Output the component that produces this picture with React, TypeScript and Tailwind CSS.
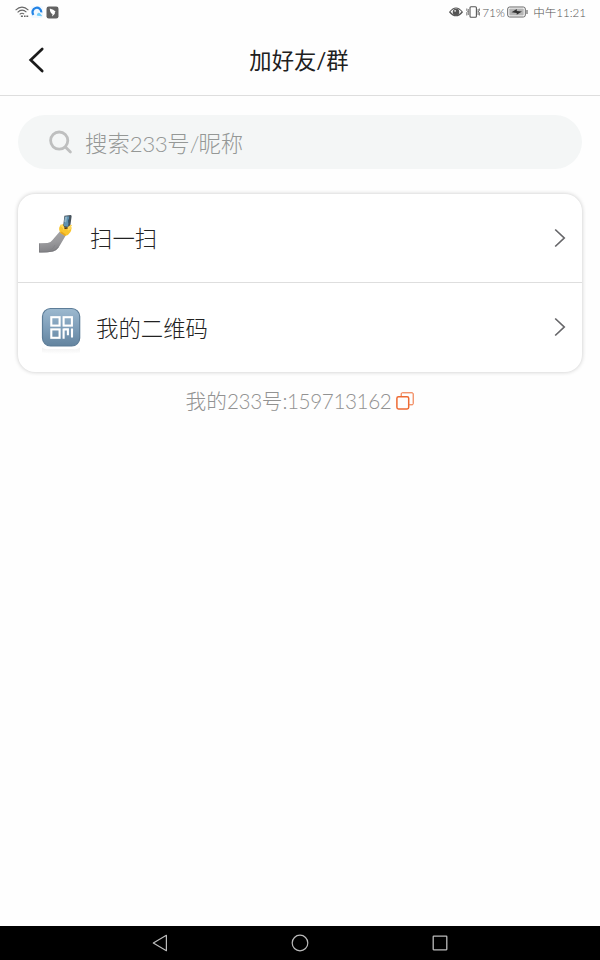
import type { ReactNode } from 'react';

function StatusBar() {
  return (
    <div className="flex h-6 items-center justify-between pr-3.5 pl-[15px] text-[#555]">
      <div className="flex items-center gap-1">
        <svg width="14" height="12" viewBox="0 0 14 12" fill="none" stroke="#666" strokeWidth="1.1">
          <path d="M.6 4.1Q7-1.9 13.4 4.1M2.6 6.3Q7 2.2 11.4 6.1M4.7 8.4Q7 6.3 9.1 8.2" />
          <path d="M5.9 10.2h2M9 10.2h1.6M11.4 10.2h1.8" strokeWidth="1.6" />
        </svg>
        <svg width="12" height="12" viewBox="0 0 11 11" className="-ml-0.5">
          <rect width="11" height="11" rx="2" fill="#f0f8ff" />
          <path d="M2.3 8.1A4 4 0 1 1 9.4 5.8" fill="none" stroke="#2383e5" strokeWidth="2" />
          <path d="M5.6 8.4Q6.5 5.4 8.2 7L9.7 9Z" fill="#6ccbfb" stroke="#6ccbfb" strokeWidth=".8" />
        </svg>
        <svg width="13" height="13" viewBox="0 0 13 13" className="-ml-px">
          <rect x=".5" y=".5" width="12" height="12" rx="2.3" fill="#626262" />
          <path d="M3.7 2.4Q7.8 3.4 9.5 5.4L8.5 7.2 9.1 7.4 6.1 10.6 6.5 8.1Q4.1 7.2 3.7 2.4Z" fill="#fff" />
        </svg>
      </div>
      <div className="flex items-center font-light">
        <svg width="14" height="12" viewBox="0 0 14 12" fill="none" stroke="#555" strokeWidth="1.2">
          <path d="M.7 6Q7-2 13.3 6 7 13.5.7 6Z" />
          <circle cx="7" cy="6" r="2.7" fill="#555" />
          <circle cx="6.1" cy="4.9" r=".8" fill="#fff" stroke="none" />
        </svg>
        <svg width="14" height="12" viewBox="0 0 14 12" fill="none" stroke="#555" strokeWidth="1.1" className="ml-[3px]">
          <rect x="4" y=".8" width="6.4" height="10.4" rx="1" />
          <path d="M.8 2.5v2l1 1-1 1v3M2.3 3v6M13.4 2.5v2l-1 1 1 1v3M12.1 3v6" strokeWidth=".8" />
        </svg>
        <span className="ml-0.5 w-[23px] pt-0.5 text-[11.8px] leading-none">71%</span>
        <svg width="21" height="12" viewBox="0 0 21 12" className="ml-0.5">
          <rect x=".7" y="1" width="17.6" height="10" rx="2" fill="#fff" stroke="#666" strokeWidth="1" />
          <rect x="2.3" y="2.6" width="14.4" height="6.8" rx=".7" fill="#b5b5b5" />
          <path d="M4.5 6.2 9.8 3v2l5.2.4-5.3 3.3V6.9Z" fill="#333" />
          <path d="M20 4v4" stroke="#666" strokeWidth="1.2" />
        </svg>
        <span className="ml-[5px] pt-0.5 text-[11.6px] leading-none whitespace-nowrap">中午11:21</span>
      </div>
    </div>
  );
}

// forearm in a grey sleeve holding up a phone
function SelfieIcon() {
  return (
    <svg width="34" height="39" viewBox="0 0 34 39">
      <defs>
        <linearGradient id="sleeve" x1="0" y1="0" x2="0.2" y2="1">
          <stop offset="0" stopColor="#a6a6a8" />
          <stop offset=".6" stopColor="#98989b" />
          <stop offset="1" stopColor="#828286" />
        </linearGradient>
      </defs>
      <path d="M0 28.2 8.5 28Q11.8 27.6 13.5 25L20.8 16.6 26.6 20.8 19.8 32.2Q17.8 35.4 14 36.4 8 37.7 0 37.4Z" fill="url(#sleeve)" />
      <path d="M.3 28.6v8.4Q8 37.4 14 36Q17.4 35.2 19.4 32" fill="none" stroke="#77777b" strokeWidth=".7" />
      <path d="M11 35.3Q15 33.3 16 30" fill="none" stroke="#828287" strokeWidth=".7" />
      <path d="M20.2 15Q19.5 10.7 23.6 9.3L31 11.5Q33.5 14 31.3 17.2 29.5 20.4 26.2 21L21.3 17.7Z" fill="#f9c52c" />
      <path d="M21.3 17.7 26.2 21 26.8 19.6 22.3 16.4Z" fill="#e6a51e" />
      <path d="M25.4.8 31.7.1Q32.8.2 32.6 1.4L31 13 24 12.2Z" fill="#46535d" />
      <path d="M26.1 1.7 30.2 1.3 29 11.8 24.8 11.1Z" fill="#5f93b2" />
      <path d="M26.1 1.7 28.4 1.5 27 7.6 25.2 6.8Z" fill="#8fb4c8" />
      <path d="M29.2 4.6h1v3.2h-1Z" fill="#315771" />
      <path d="M24 12.8q2.6 1 5-.2" fill="none" stroke="#4c3817" strokeWidth="1.6" />
      <path d="M22 10.5q2.6.6 2.6 3.3M32 10.6l-2.6 2M32 13l-2.7 1.6" fill="none" stroke="#ffd757" strokeWidth="1.8" strokeLinecap="round" />
    </svg>
  );
}

function QrIcon() {
  return (
    <svg width="40" height="48" viewBox="0 0 40 48">
      <defs>
        <linearGradient id="tile" x1="0" y1="0" x2="0" y2="1">
          <stop offset="0" stopColor="#9db9cf" />
          <stop offset=".5" stopColor="#7f9fba" />
          <stop offset="1" stopColor="#63849f" />
        </linearGradient>
        <linearGradient id="reflection" x1="0" y1="0" x2="0" y2="1">
          <stop offset="0" stopColor="#f1f1f1" />
          <stop offset="1" stopColor="#fff" />
        </linearGradient>
      </defs>
      <path d="M1 40.5Q4 43 8 42h24q4 1 7-1.5v5Q20 49 1 45.5Z" fill="url(#reflection)" />
      <rect x="1.5" y="1.5" width="37.2" height="37.4" rx="8" fill="url(#tile)" stroke="#5d7d98" strokeWidth="1.2" />
      <g fill="none" stroke="#fff" strokeWidth="2.1">
        <rect x="10.3" y="10.2" width="8.3" height="8.4" />
        <rect x="22.6" y="10.2" width="8.3" height="8.4" />
        <rect x="10.3" y="22.4" width="8.3" height="8.4" />
        <path d="M22.6 21.4v10.4M22.6 22.4h4.3v5.8M31 21.4v9" />
      </g>
    </svg>
  );
}

function Chevron() {
  return (
    <svg width="12" height="20" viewBox="0 0 12 20" fill="none" stroke="#666669" strokeWidth="1.7">
      <path d="M1.2 1.5 10.2 10 1.2 18.5" />
    </svg>
  );
}

function MenuRow({ icon, label, className }: { icon: ReactNode; label: string; className?: string }) {
  return (
    <button className={`flex w-full items-center pr-4 pb-px text-left ${className ?? ''}`}>
      {icon}
      <span className="flex-1 pt-[3px] text-[22.4px] leading-8 text-[#222]">{label}</span>
      <Chevron />
    </button>
  );
}

export default function App() {
  return (
    <div className="flex h-[960px] w-[600px] flex-col bg-[#fefefe] font-[Lato,'Noto_Sans_CJK_SC',sans-serif] font-light">
      <StatusBar />

      <header className="grid h-[72px] shrink-0 grid-cols-[1fr_auto_1fr] items-center border-b border-[#dedede]">
        <button className="ml-7 w-5">
          <svg width="17" height="26" viewBox="0 0 17 26" fill="none" stroke="#1b1b1b" strokeWidth="2.7">
            <path d="M14.2 2 2.7 13l11.5 11" strokeLinecap="round" />
          </svg>
        </button>
        <h1 className="-ml-0.5 pt-[3px] text-[22.3px] leading-8 font-normal text-[#202020]">加好友/群</h1>
      </header>

      <main className="flex-1 px-[18px] pt-[19px]">
        <div className="flex h-[54px] items-center rounded-full bg-[#f4f6f6] pl-[31px]">
          <svg width="24" height="24" viewBox="0 0 24 24" fill="none" stroke="#bebfbf" strokeWidth="2.8">
            <circle cx="10.2" cy="10.6" r="8.6" />
            <path d="m16.4 17 5 5" strokeLinecap="round" />
          </svg>
          <span className="ml-3 pt-[3px] text-[22.4px] leading-8 text-[#959896]">
            搜索<span className="tracking-[-0.5px]">233</span>号<span className="tracking-[-1px]">/</span>昵称
          </span>
        </div>

        <div className="mt-[25px] overflow-hidden rounded-[17px] bg-white shadow-[0_0_4px_rgba(0,0,0,0.22)]">
          <MenuRow icon={<span className="mr-[17px] ml-[21px] pb-1.5"><SelfieIcon /></span>} label="扫一扫" className="h-[89px] border-b border-[#dedede]" />
          <MenuRow icon={<span className="mr-[15px] ml-[23px] pt-2"><QrIcon /></span>} label="我的二维码" className="h-[89px]" />
        </div>

        <div className="mt-3 flex items-center justify-center text-[20.7px] leading-8 text-[#929292]">
          <span className="pt-px">
            我的<span className="tracking-[-0.4px]">233</span>号<span className="tracking-[-0.4px]">:159713162</span>
          </span>
          <svg width="18" height="18" viewBox="0 0 18 18" fill="none" stroke="#ee6a33" strokeWidth="1.5" className="ml-[5px]">
            <path d="M5.2 4.6V1.8q0-1 1-1h10q1 0 1 1v10q0 1-1 1h-3" strokeWidth="1" />
            <rect x=".9" y="4.7" width="11.8" height="12.2" rx="1.6" />
          </svg>
        </div>
      </main>

      <nav className="flex h-[34px] shrink-0 items-center justify-center gap-[123px] bg-black">
        <svg width="16" height="18" viewBox="0 0 16 18" fill="none" stroke="#bbb" strokeWidth="1.2">
          <path d="M14.4 1.3v15.4L1.3 9Z" strokeLinejoin="round" />
        </svg>
        <svg width="18" height="18" viewBox="0 0 18 18" fill="none" stroke="#bbb" strokeWidth="1.2">
          <circle cx="9" cy="9" r="7.8" />
        </svg>
        <svg width="16" height="16" viewBox="0 0 16 16" fill="none" stroke="#bbb" strokeWidth="1.3">
          <rect x="1.2" y="1.2" width="13.6" height="13.6" rx=".5" />
        </svg>
      </nav>
    </div>
  );
}
